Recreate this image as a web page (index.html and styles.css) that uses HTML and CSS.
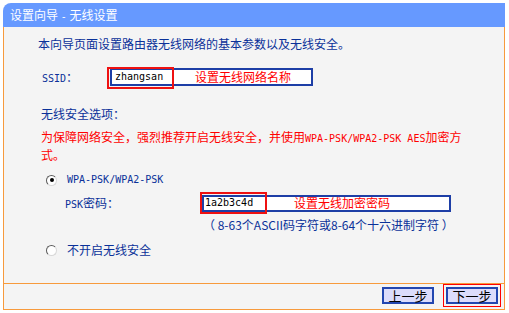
FILE: index.html
```html
<!DOCTYPE html>
<html lang="zh-CN">
<head>
    <meta charset="UTF-8">
    <title>设置向导 - 无线设置</title>
    <link rel="stylesheet" href="styles.css">
</head>
<body>
    <div class="wizard">
        <div class="wizard-head">设置向导 <span class="mono">-</span> 无线设置</div>

        <div class="wizard-body">
            <p class="intro">本向导页面设置路由器无线网络的基本参数以及无线安全。</p>

            <div class="row row-ssid">
                <span class="label label-ssid"><span class="mono">SSID</span>：</span>
                <div class="field field-ssid">
                    <span class="field-value mono">zhangsan</span>
                    <span class="field-note">设置无线网络名称</span>
                    <span class="mark mark-ssid"></span>
                </div>
            </div>

            <p class="section">无线安全选项：</p>
            <p class="warn">为保障网络安全，强烈推荐开启无线安全，并使用<span class="mono">WPA-PSK/WPA2-PSK AES</span>加密方<br><span>式。</span></p>

            <div class="row radio-row radio-first">
                <span class="radio checked"></span>
                <span class="mono">WPA-PSK/WPA2-PSK</span>
            </div>

            <div class="row row-psk">
                <span class="label label-psk"><span class="mono">PSK</span>密码：</span>
                <div class="field field-psk">
                    <span class="field-value mono">1a2b3c4d</span>
                    <span class="field-note">设置无线加密密码</span>
                    <span class="mark mark-psk"></span>
                </div>
            </div>
            <p class="hint">（ 8-63个ASCII码字符或8-64个十六进制字符 ）</p>

            <div class="row radio-row radio-second">
                <span class="radio"></span>
                <span>不开启无线安全</span>
            </div>
        </div>

        <div class="wizard-foot">
            <button class="btn">上一步</button>
            <button class="btn btn-next">下一步</button>
        </div>
    </div>
</body>
</html>
```

FILE: styles.css
```css
body {
    margin: 0;
    background: #ffffff;
    font-family: "Noto Sans CJK SC", "Noto Sans", sans-serif;
    font-size: 12px;
    color: #0a3199;
}

p {
    margin: 0;
}

.mono {
    font-family: "DejaVu Sans Mono", "Noto Sans CJK SC", monospace;
    font-size: 10px;
    line-height: 12px;
}

.wizard {
    width: 502px;
    margin: 3px 0 0 3px;
}

.wizard-head {
    height: 24px;
    line-height: 23px;
    padding-left: 7px;
    background: #6699ff;
    border-top-left-radius: 8px;
    color: #ffffff;
    font-size: 12px;
}

.wizard-body {
    background: #f4f4f4;
    border-left: 1px solid #f79a3c;
    border-right: 1px solid #f79a3c;
    padding: 8px 0 24px 34px;
    line-height: 18px;
}

.row {
    display: flex;
    align-items: center;
}

.row-ssid {
    height: 22px;
    margin-top: 13px;
    margin-left: 4px;
}

.label-ssid {
    width: 68px;
}

.field {
    position: relative;
    display: flex;
    align-items: center;
    box-sizing: border-box;
    background: #ffffff;
    border: 2px solid #1d3ea6;
}

.field-ssid {
    width: 203px;
    height: 18px;
}

.field-psk {
    width: 249px;
    height: 17px;
}

.field-value {
    color: #000000;
    width: 80px;
    padding-left: 3px;
}

.field-psk .field-value {
    width: 89px;
    padding-left: 1px;
}

.field-note {
    color: #ff0000;
}

.mark {
    position: absolute;
    box-sizing: border-box;
    border: 2px solid #ee1111;
    width: 67px;
    height: 22px;
}

.mark-ssid {
    left: -5px;
    top: -3px;
}

.mark-psk {
    left: -4px;
    top: -5px;
}

.section {
    margin-top: 17px;
    padding-left: 3px;
}

.warn {
    margin-top: 5px;
    padding-left: 3px;
    width: 430px;
    color: #ff0000;
}

.radio-row {
    height: 18px;
    margin-left: 8px;
    gap: 10px;
}

.radio-first {
    margin-top: 7px;
}

.radio-second {
    margin-top: 7px;
}

.radio {
    position: relative;
    width: 11px;
    height: 11px;
    box-sizing: border-box;
    border-radius: 50%;
    background: #ffffff;
    border: 1px solid;
    border-color: #5a5a5a #d8d8d8 #d8d8d8 #5a5a5a;
}

.radio.checked::after {
    content: "";
    position: absolute;
    left: 2.5px;
    top: 2.5px;
    width: 4px;
    height: 4px;
    border-radius: 50%;
    background: #000000;
}

.row-psk {
    height: 22px;
    margin-top: 3px;
    margin-left: 27px;
}

.label-psk {
    width: 137px;
}

.hint {
    margin-top: 2px;
    padding-left: 165px;
}

.wizard-foot {
    display: flex;
    justify-content: flex-end;
    gap: 12px;
    height: 22px;
    padding: 3px 6px 0 0;
    background: #f4f4f4;
    border: 1px solid #f79a3c;
}

.btn {
    width: 52px;
    height: 17px;
    padding: 0;
    background: #dcdcfb;
    border: 2px solid #2246b0;
    font-family: "Noto Sans CJK SC", sans-serif;
    font-size: 13px;
    line-height: 13px;
    color: #000000;
}

.btn-next {
    outline: 1px solid #ff0000;
    outline-offset: 2px;
}
```
